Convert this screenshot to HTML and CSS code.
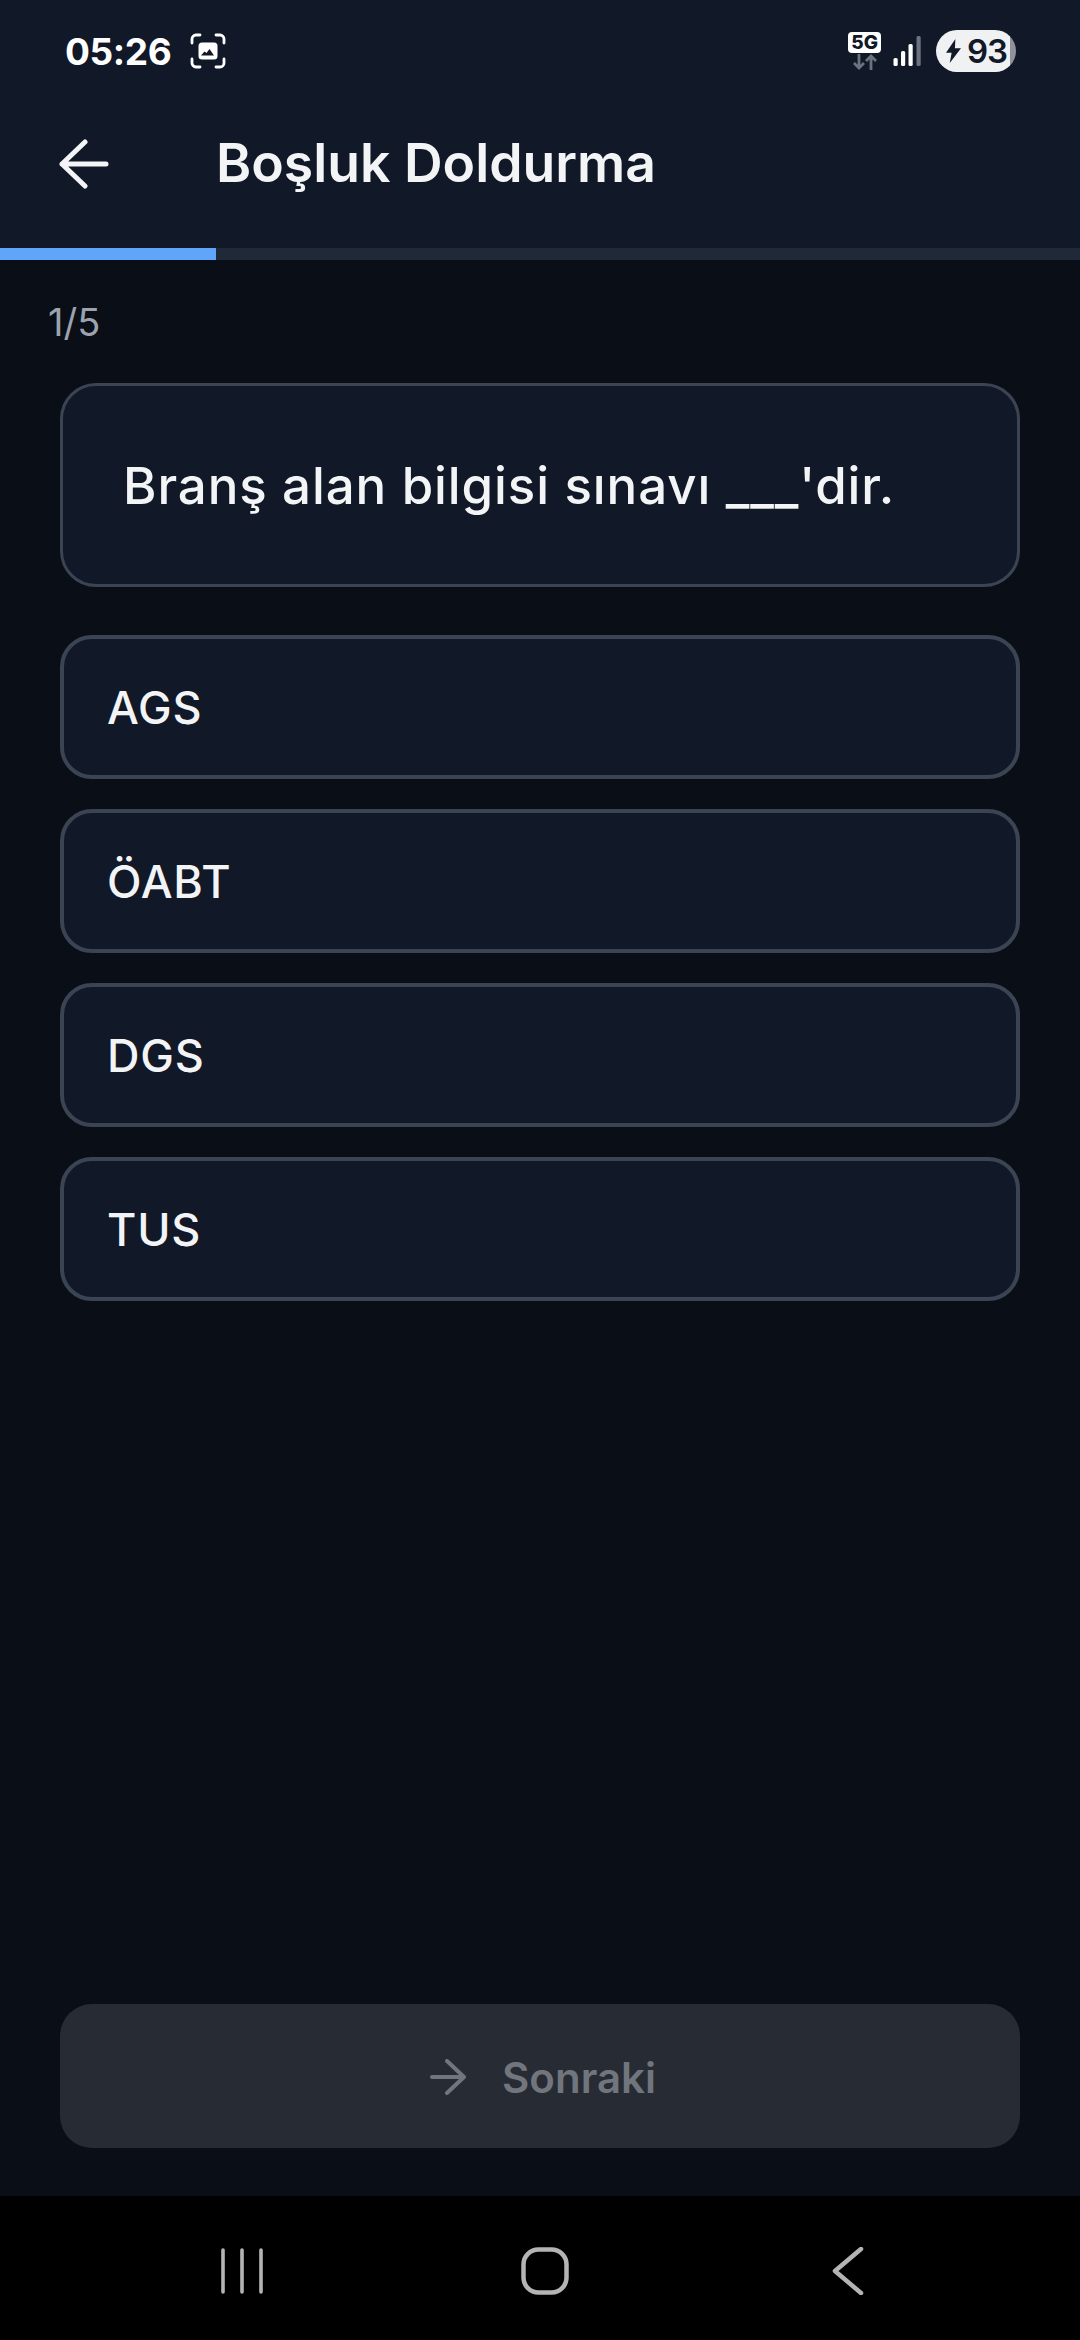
FILE: index.html
```html
<!DOCTYPE html>
<html lang="tr">
<head>
    <meta charset="UTF-8">
    <meta name="viewport" content="width=device-width, initial-scale=1.0">
    <title>Boşluk Doldurma</title>
    <link rel="stylesheet" href="styles.css">
</head>
<body>

    <div id="app">
        <header class="top">
            <div class="status">
                <div class="status-left">
                    <span class="clock">05:26</span>
                    <svg class="shot-icon" width="36" height="36" viewBox="0 0 36 36" fill="none">
                        <path d="M2 10V6a4 4 0 0 1 4-4h4M26 2h4a4 4 0 0 1 4 4v4M34 26v4a4 4 0 0 1-4 4h-4M10 34H6a4 4 0 0 1-4-4v-4" stroke="#fff" stroke-width="2.8" stroke-linecap="round"/>
                        <rect x="8.500" y="9.500" width="19" height="17" rx="3.500" fill="#fff"/>
                        <path d="M11 22.500l3.500-4 2 1.500 3-4 4.500 6.500z" fill="#111827"/>
                    </svg>
                </div>
                <div class="status-right">
                    <div class="net">
                        <span class="net-label">5G</span>
                        <svg width="26" height="16" viewBox="0 0 26 16" fill="none" stroke="#6b7280" stroke-width="2.8">
                            <path d="M7 0v14M2 9l5 5 5-5"/>
                            <path d="M19 16V2M14 7l5-5 5 5"/>
                        </svg>
                    </div>
                    <svg class="signal" width="28" height="30" viewBox="0 0 28 30">
                        <rect x="0.500" y="22" width="4.200" height="8" rx="1.500" fill="#fff"/>
                        <rect x="8" y="15" width="4.200" height="15" rx="1.500" fill="#fff"/>
                        <rect x="15.500" y="8" width="4.200" height="22" rx="1.500" fill="#fff"/>
                        <rect x="23.500" y="0" width="4.200" height="30" rx="1.500" fill="#6b7280"/>
                    </svg>
                    <div class="battery">
                        <svg width="15" height="24" viewBox="0 0 16 26" preserveAspectRatio="none">
                            <path d="M10 0L0 15h6l-2 11L16 10H9.500z" fill="#111827"/>
                        </svg>
                        <span>93</span>
                    </div>
                </div>
            </div>
            <div class="title-bar">
                <svg class="back" width="50" height="50" viewBox="0 0 50 50" fill="none" stroke="#f3f4f6" stroke-width="5" stroke-linecap="round" stroke-linejoin="round">
                    <path d="M47 25H3M26 3L3 25l23 22"/>
                </svg>
                <h1>Boşluk Doldurma</h1>
            </div>
        </header>

        <div class="progress"><div class="progress-fill"></div></div>

        <main class="content">
            <div class="counter">1/5</div>
            <div class="question">Branş alan bilgisi sınavı ___'dir.</div>
            <div class="options">
                <button class="option">AGS</button>
                <button class="option">ÖABT</button>
                <button class="option">DGS</button>
                <button class="option">TUS</button>
            </div>
        </main>

        <div class="footer">
            <button class="next" disabled>
                <svg width="36" height="36" viewBox="0 0 36 36" fill="none" stroke="#71757d" stroke-width="4" stroke-linecap="round" stroke-linejoin="round">
                    <path d="M2 18h32M17 2l17 16-17 16"/>
                </svg>
                <span>Sonraki</span>
            </button>
        </div>

        <nav class="nav-bar">
            <svg width="44" height="46" viewBox="0 0 44 46" fill="none" stroke="#b4b4b4" stroke-width="3.600" stroke-linecap="round">
                <path d="M3 2v42M22 2v42M41 2v42"/>
            </svg>
            <svg width="48" height="48" viewBox="0 0 48 48" fill="none" stroke="#b4b4b4" stroke-width="4.500">
                <rect x="2.500" y="2.500" width="43" height="43" rx="15"/>
            </svg>
            <svg class="nav-back" width="32" height="48" viewBox="0 0 32 48" fill="none" stroke="#b4b4b4" stroke-width="4.500" stroke-linecap="round" stroke-linejoin="round">
                <path d="M29 2L3 24l26 22"/>
            </svg>
        </nav>
    </div>

</body>
</html>
```

FILE: styles.css
```css
* {
    box-sizing: border-box;
}

body {
    margin: 0;
    background-color: #0a0e17;
    font-family: 'Inter', 'Noto Sans', sans-serif;
}

#app {
    display: flex;
    flex-direction: column;
    width: 1080px;
    height: 2340px;
    overflow: hidden;
}

.top {
    height: 248px;
    background-color: #111827;
}

.status {
    display: flex;
    align-items: center;
    justify-content: space-between;
    height: 100px;
    padding: 2px 64px 0 65px;
}

.status-left {
    display: flex;
    align-items: center;
    gap: 19px;
}

.clock {
    font-size: 37px;
    font-weight: 700;
    letter-spacing: -0.4px;
    color: #fff;
}

.status-right {
    display: flex;
    align-items: center;
    gap: 12px;
}

.net {
    display: flex;
    flex-direction: column;
    align-items: center;
    gap: 1px;
}

.net-label {
    background-color: #fff;
    color: #111827;
    font-size: 19px;
    font-weight: 800;
    line-height: 21px;
    padding: 0 3px;
    border-radius: 4px;
}

.signal {
    margin-right: 3px;
}

.battery {
    display: flex;
    align-items: center;
    gap: 6px;
    width: 80px;
    height: 42px;
    padding-left: 10px;
    border-radius: 21px;
    background: linear-gradient(to right, #f0f1f3 93%, #8f9298 93%);
    color: #111827;
    font-size: 33px;
    font-weight: 600;
    letter-spacing: -1px;
}

.title-bar {
    display: flex;
    align-items: center;
    height: 122px;
    padding: 0 0 0 59px;
    gap: 107px;
}

.back {
    margin-top: 6px;
}

h1 {
    margin: 2px 0 0;
    font-size: 53.5px;
    font-weight: 600;
    color: #f3f4f6;
}

.progress {
    height: 12px;
    background-color: #1f2937;
}

.progress-fill {
    width: 216px;
    height: 100%;
    background-color: #60a5fa;
}

.content {
    flex: 1;
    display: flex;
    flex-direction: column;
    padding: 0 60px;
}

.counter {
    margin: 38px 0 0 -12px;
    height: 48px;
    font-size: 38px;
    line-height: 48px;
    color: #9ca3af;
}

.question {
    display: flex;
    align-items: center;
    height: 204px;
    margin-top: 37px;
    padding: 0 60px;
    background-color: #111827;
    border: 3px solid #3b4453;
    border-radius: 36px;
    font-size: 51px;
    font-weight: 450;
    letter-spacing: 0.9px;
    color: #f3f4f6;
}

.options {
    display: flex;
    flex-direction: column;
    gap: 30px;
    margin-top: 48px;
}

.option {
    display: block;
    width: 100%;
    height: 144px;
    padding: 0 43px;
    background-color: #111827;
    border: 4px solid #3b4453;
    border-radius: 32px;
    font-family: inherit;
    font-size: 45px;
    font-weight: 450;
    letter-spacing: 0.8px;
    text-align: left;
    color: #f3f4f6;
}

.footer {
    padding: 0 60px 48px;
}

.next {
    display: flex;
    align-items: center;
    justify-content: center;
    gap: 36px;
    width: 100%;
    height: 144px;
    padding: 2px 0 0 6px;
    background-color: #272b34;
    border: none;
    border-radius: 32px;
    font-family: inherit;
    font-size: 42px;
    font-weight: 600;
    color: #71757d;
}

.nav-bar {
    display: flex;
    align-items: center;
    gap: 257px;
    height: 144px;
    padding: 6px 0 0 220px;
    background-color: #000;
}

.nav-back {
    margin-left: 6px;
}
```
